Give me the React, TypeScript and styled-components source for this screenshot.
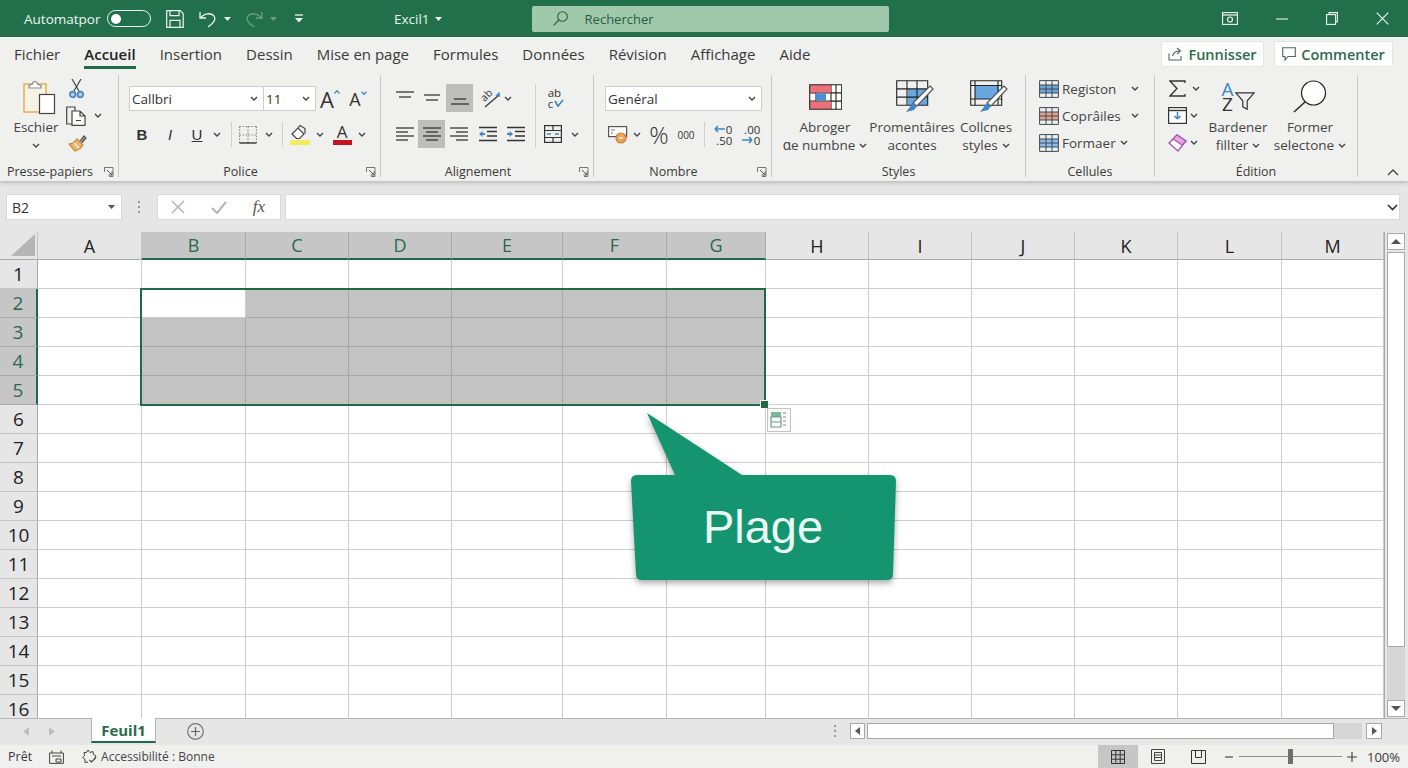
import React from 'react';
import styled, { createGlobalStyle } from 'styled-components';

const GlobalStyle = createGlobalStyle`
  html, body { margin: 0; padding: 0; background: #fff; }
  body { font-family: "Open Sans", "Noto Sans", sans-serif; color: #333; overflow: hidden; }
`;

const GREEN = '#21704b';
const DARK_GREEN = '#1f6b48';

const Page = styled.div`
  width: 1408px;
  height: 768px;
  display: flex;
  flex-direction: column;
  overflow: hidden;
`;

/* ---------- title bar ---------- */
const TitleBar = styled.div`
  height: 37px;
  flex: none;
  background: ${GREEN};
  display: flex;
  align-items: center;
  padding-left: 24px;
  color: #eef5f0;
`;
const TitleText = styled.span<{ $w?: number; $ml?: number }>`
  font-size: 13.5px;
  margin-left: ${p => p.$ml ?? 0}px;
  width: ${p => (p.$w ? `${p.$w}px` : 'auto')};
  white-space: nowrap;
`;
const Toggle = styled.span`
  margin-left: 7px;
  width: 44px;
  height: 17px;
  box-sizing: border-box;
  border: 1.5px solid #f1f6f2;
  border-radius: 9px;
  display: flex;
  align-items: center;
  padding-left: 3px;
`;
const Knob = styled.span`
  width: 10px;
  height: 10px;
  border-radius: 50%;
  background: #fff;
`;
const Slot = styled.span<{ $w: number; $ml?: number }>`
  flex: none;
  width: ${p => p.$w}px;
  margin-left: ${p => p.$ml ?? 0}px;
  display: flex;
  align-items: center;
  justify-content: center;
`;
const SearchBox = styled.div`
  margin-left: 90px;
  width: 357px;
  height: 26px;
  background: #a0c9ab;
  border-radius: 2px;
  display: flex;
  align-items: center;
  padding-left: 21px;
  box-sizing: border-box;
  font-size: 13px;
  color: #2b5c42;
`;
const SearchText = styled.span`
  margin-left: 17px;
`;
const WindowControls = styled.div`
  margin-left: auto;
  display: flex;
  align-items: center;
  padding-right: 19px;
`;

/* ---------- ribbon ---------- */
const Ribbon = styled.div`
  height: 144px;
  flex: none;
  background: #f0f0ee;
  position: relative;
  z-index: 2;
  box-shadow: 0 2px 4px rgba(0, 0, 0, 0.18);
`;
const TabRow = styled.div`
  height: 33px;
  display: flex;
  align-items: center;
  padding: 0 15px 0 14px;
  gap: 24px;
  font-size: 15px;
  color: #3a3a3a;
`;
const Tab = styled.span<{ $active?: boolean }>`
  position: relative;
  white-space: nowrap;
  font-weight: ${p => (p.$active ? 600 : 400)};
  color: ${p => (p.$active ? '#222' : 'inherit')};
  &::after {
    content: '';
    display: ${p => (p.$active ? 'block' : 'none')};
    position: absolute;
    left: 0;
    right: 0;
    bottom: -5px;
    height: 3px;
    background: ${DARK_GREEN};
  }
`;
const TabActions = styled.div`
  margin-left: auto;
  margin-top: 1px;
  display: flex;
  gap: 10px;
`;
const ActionButton = styled.div<{ $w: number }>`
  width: ${p => p.$w}px;
  height: 26px;
  box-sizing: border-box;
  background: #fff;
  border: 1px solid #e4e4e2;
  border-radius: 2px;
  display: flex;
  align-items: center;
  justify-content: center;
  gap: 5px;
  font-size: 14.5px;
  font-weight: 600;
  color: #2f6a4d;
`;
const Groups = styled.div`
  display: flex;
  margin-top: 5px;
  height: 102px;
`;
const Group = styled.section<{ $w: number; $plain?: boolean }>`
  width: ${p => p.$w}px;
  flex: none;
  box-sizing: border-box;
  border-right: ${p => (p.$plain ? 'none' : '1px solid #c9c9c7')};
  display: flex;
  flex-direction: column;
`;
const GroupBody = styled.div<{ $pl?: number; $column?: boolean }>`
  height: 85px;
  display: flex;
  flex-direction: ${p => (p.$column ? 'column' : 'row')};
  padding-left: ${p => p.$pl ?? 0}px;
`;
const GroupFooter = styled.div`
  height: 17px;
  display: flex;
  line-height: 24px;
  font-size: 12.5px;
  color: #3a3a3a;
`;
const GroupLabel = styled.span`
  flex: 1;
  text-align: center;
  white-space: nowrap;
`;
const Launcher = styled.span`
  width: 18px;
  flex: none;
  display: flex;
  justify-content: center;
  padding-top: 7px;
  height: 9px;
`;
const Large = styled.div<{ $w: number }>`
  width: ${p => p.$w}px;
  flex: none;
  display: flex;
  flex-direction: column;
  align-items: center;
  font-size: 13.5px;
  line-height: 18px;
  color: #444;
  white-space: nowrap;
`;
const LargeIcon = styled.div<{ $ml?: number }>`
  height: 43px;
  margin-left: ${p => p.$ml ?? 0}px;
  display: flex;
  align-items: center;
  justify-content: center;
`;
const ToolColumn = styled.div`
  display: flex;
  flex-direction: column;
`;
const ToolRow = styled.div<{ $h?: number; $w?: number }>`
  height: ${p => p.$h ?? 27}px;
  width: ${p => (p.$w ? `${p.$w}px` : 'auto')};
  display: flex;
  align-items: center;
  flex: none;
`;
const Combo = styled.div<{ $w: number; $ml?: number }>`
  width: ${p => p.$w}px;
  margin-left: ${p => p.$ml ?? 0}px;
  height: 25px;
  box-sizing: border-box;
  flex: none;
  background: #fff;
  border: 1px solid #cdcdcb;
  display: flex;
  align-items: center;
  justify-content: space-between;
  padding: 0 5px 0 2px;
  font-size: 13.5px;
  color: #333;
`;
const FontGrowText = styled.span<{ $size: number; $thin?: boolean }>`
  font-size: ${p => p.$size}px;
  font-weight: ${p => (p.$thin ? 300 : 400)};
  line-height: 1;
  color: #333;
`;
const StyleGlyph = styled.span<{ $weight?: number; $italic?: boolean; $line?: boolean }>`
  font-family: "Liberation Sans", sans-serif;
  font-size: 15px;
  font-weight: ${p => p.$weight ?? 400};
  font-style: ${p => (p.$italic ? 'italic' : 'normal')};
  text-decoration: ${p => (p.$line ? 'underline' : 'none')};
  color: #333;
`;
const ColorStack = styled.span`
  display: flex;
  flex-direction: column;
  align-items: center;
  font-size: 17px;
  line-height: 16px;
  color: #333;
`;
const ColorBar = styled.span`
  width: 19px;
  height: 5px;
  background: #c8141e;
`;
const VLine = styled.span<{ $ml?: number; $h?: number }>`
  flex: none;
  width: 1px;
  height: ${p => (p.$h ? `${p.$h}px` : 'auto')};
  align-self: ${p => (p.$h ? 'center' : 'stretch')};
  margin-left: ${p => p.$ml ?? 0}px;
  background: #cfcfcd;
`;
const AlignButton = styled.span<{ $w: number; $on?: boolean }>`
  width: ${p => p.$w}px;
  height: 28px;
  flex: none;
  display: flex;
  align-items: center;
  justify-content: center;
  background: ${p => (p.$on ? '#bdbdbb' : 'transparent')};
`;
const AlignBody = styled.div`
  display: flex;
  padding-top: 9px;
  height: 64px;
`;
const AlignColumn = styled.div<{ $w?: number }>`
  display: flex;
  flex-direction: column;
  gap: 8px;
  width: ${p => (p.$w ? `${p.$w}px` : 'auto')};
`;
const NumberBody = styled.div`
  display: flex;
  flex-direction: column;
  padding-top: 11px;
  gap: 11px;
`;
const OrientBox = styled.span`
  display: grid;
  place-items: center;
  width: 24px;
  height: 22px;
  & > * {
    grid-area: 1 / 1;
  }
`;
const OrientText = styled.span`
  font-size: 10.5px;
  line-height: 10px;
  color: #333;
  transform: translate(-4px, -3px) rotate(-45deg);
`;
const WrapStack = styled.span`
  display: flex;
  flex-direction: column;
  font-size: 11.5px;
  line-height: 11px;
  color: #333;
`;
const WrapLine = styled.span`
  display: flex;
  align-items: center;
  gap: 1px;
`;
const DecimalStack = styled.span<{ $end?: boolean }>`
  display: flex;
  flex-direction: column;
  align-items: ${p => (p.$end ? 'flex-end' : 'center')};
  font-size: 11.5px;
  line-height: 11px;
  color: #333;
`;
const DecimalLine = styled.span`
  display: flex;
  align-items: center;
  gap: 1px;
`;
const SortBox = styled.span`
  display: flex;
  align-items: center;
  gap: 1px;
`;
const SortLetters = styled.span`
  display: flex;
  flex-direction: column;
  align-items: center;
  font-size: 19px;
  line-height: 15px;
  color: #333;
`;
const SortTop = styled.span`
  color: #3f86c6;
`;
const ListText = styled.span`
  font-size: 13.5px;
  margin-left: 3px;
  color: #444;
  white-space: nowrap;
`;
const Push = styled.span`
  margin-left: auto;
`;
const Collapse = styled.div`
  flex: 1;
  display: flex;
  justify-content: flex-end;
  align-items: flex-end;
  padding: 0 10px 1px 0;
`;

/* ---------- formula bar ---------- */
const FormulaBar = styled.div`
  height: 51px;
  flex: none;
  box-sizing: border-box;
  background: #e6e6e6;
  padding: 13px 0 0 6px;
  display: flex;
  align-items: flex-start;
`;
const FieldBox = styled.div<{ $w: number; $ml?: number; $start?: boolean; $pr?: number }>`
  width: ${p => p.$w}px;
  margin-left: ${p => p.$ml ?? 0}px;
  height: 26px;
  box-sizing: border-box;
  flex: none;
  background: #fff;
  border: 1px solid #dadada;
  display: flex;
  align-items: center;
  justify-content: ${p => (p.$start ? 'flex-start' : 'space-between')};
  font-size: 14px;
  padding: 0 ${p => p.$pr ?? 6}px 0 5px;
`;
const Dots = styled.span<{ $ml?: number }>`
  margin-left: ${p => p.$ml ?? 16}px;
  flex: none;
  width: 2px;
  height: 12px;
  margin-top: 7px;
  background: repeating-linear-gradient(to bottom, #999 0 2px, transparent 2px 5px);
`;
const FxText = styled.span`
  font-family: "Liberation Serif", serif;
  font-style: italic;
  font-size: 17px;
  color: #555;
`;

/* ---------- sheet ---------- */
const Sheet = styled.div`
  height: 486px;
  flex: none;
  display: flex;
  background: #e6e6e6;
`;
const GridWrap = styled.div`
  position: relative;
  width: 1385px;
  flex: none;
  overflow: hidden;
  box-sizing: border-box;
  border-right: 1px solid #a9a9a9;
`;
const Cells = styled.div`
  display: grid;
  grid-template-columns: 38px 104px 104px 103px 103px 111px 104px 99px 103px 103px 103px 103px 104px 102px;
  grid-template-rows: 28px repeat(16, 29px);
  background: #fff;
`;
const Corner = styled.div`
  background: #e6e6e6;
  border-right: 1px solid #c4c4c4;
  border-bottom: 1px solid #a9a9a9;
  display: flex;
  align-items: flex-end;
  justify-content: flex-end;
  padding: 0 2px 3px 0;
`;
const ColHead = styled.div<{ $on?: boolean }>`
  box-sizing: border-box;
  background: ${p => (p.$on ? '#c6c6c6' : '#e6e6e6')};
  color: ${p => (p.$on ? '#2a6a4b' : '#222')};
  border-right: 1px solid ${p => (p.$on ? '#a9a9a9' : '#c4c4c4')};
  border-bottom: ${p => (p.$on ? `2px solid ${DARK_GREEN}` : '1px solid #a9a9a9')};
  display: flex;
  align-items: center;
  justify-content: center;
  font-size: 18px;
`;
const RowHead = styled.div<{ $on?: boolean }>`
  box-sizing: border-box;
  background: ${p => (p.$on ? '#c6c6c6' : '#e6e6e6')};
  color: ${p => (p.$on ? '#2a6a4b' : '#222')};
  border-right: ${p => (p.$on ? `2px solid ${DARK_GREEN}` : '1px solid #a9a9a9')};
  border-bottom: 1px solid ${p => (p.$on ? '#a9a9a9' : '#c4c4c4')};
  display: flex;
  align-items: center;
  justify-content: center;
  font-size: 19px;
`;
const Cell = styled.div<{ $sel?: boolean }>`
  box-sizing: border-box;
  background: ${p => (p.$sel ? '#c3c3c3' : '#fff')};
  border-right: 1px solid ${p => (p.$sel ? '#a8a8a8' : '#cdcdcd')};
  border-bottom: 1px solid ${p => (p.$sel ? '#a8a8a8' : '#cdcdcd')};
`;
const Selection = styled.div`
  position: absolute;
  left: 140px;
  top: 56px;
  width: 626px;
  height: 118px;
  box-sizing: border-box;
  border: 2px solid ${DARK_GREEN};
  pointer-events: none;
`;
const FillHandle = styled.span`
  position: absolute;
  right: -5px;
  bottom: -5px;
  width: 7px;
  height: 7px;
  background: ${DARK_GREEN};
  border: 1px solid #fff;
`;
const QuickAnalysis = styled.div`
  position: absolute;
  left: 767px;
  top: 176px;
  width: 24px;
  height: 24px;
  box-sizing: border-box;
  background: #fafafa;
  border: 1px solid #c4c4c4;
  display: flex;
  align-items: center;
  justify-content: center;
`;
const Callout = styled.div`
  position: absolute;
  left: 625px;
  top: 178px;
  width: 276px;
  height: 180px;
  box-sizing: border-box;
  padding: 65px 0 12px;
  display: flex;
  align-items: center;
  justify-content: center;
`;
const CalloutShape = styled.svg`
  position: absolute;
  left: 0;
  top: 0;
  filter: drop-shadow(0 3px 3px rgba(0, 0, 0, 0.35));
`;
const CalloutLabel = styled.span`
  position: relative;
  font-family: "Liberation Sans", Arial, sans-serif;
  font-size: 47px;
  color: #e9faf4;
`;
const VScroll = styled.div`
  width: 23px;
  flex: none;
  box-sizing: border-box;
  padding: 1px 3px 1px 2px;
  display: flex;
  flex-direction: column;
  gap: 2px;
`;
const ScrollButton = styled.div<{ $w?: number; $h?: number; $ml?: number }>`
  width: ${p => (p.$w ? `${p.$w}px` : 'auto')};
  height: ${p => p.$h ?? 17}px;
  margin-left: ${p => p.$ml ?? 0}px;
  flex: none;
  box-sizing: border-box;
  background: #fff;
  border: 1px solid #a9a9a9;
  display: flex;
  align-items: center;
  justify-content: center;
`;
const VThumb = styled.div`
  height: 395px;
  flex: none;
  box-sizing: border-box;
  background: #fff;
  border: 1px solid #a9a9a9;
`;
const VTrack = styled.div`
  flex: 1;
  background: #d6d6d6;
  margin: -2px 0;
`;

/* ---------- sheet tabs ---------- */
const SheetTabs = styled.div`
  height: 27px;
  flex: none;
  box-sizing: border-box;
  background: #e6e6e6;
  box-shadow: inset 0 1px 0 #b5b5b5;
  display: flex;
  align-items: flex-start;
`;
const SheetTab = styled.div`
  margin-left: 35px;
  width: 65px;
  height: 25px;
  flex: none;
  box-sizing: border-box;
  background: #fff;
  border: 1px solid #b5b5b5;
  border-top: none;
  border-bottom: 2px solid ${DARK_GREEN};
  display: flex;
  align-items: center;
  justify-content: center;
  font-size: 15px;
  font-weight: 700;
  color: #2a6a4b;
`;
const HScrollArea = styled.div`
  margin-left: 10px;
  padding-top: 5px;
  display: flex;
  align-items: flex-start;
`;
const HTrack = styled.div`
  width: 495px;
  height: 16px;
  margin-left: 2px;
  flex: none;
  background: #d6d6d6;
  display: flex;
`;
const HThumb = styled.div`
  width: 467px;
  box-sizing: border-box;
  background: #fff;
  border: 1px solid #a9a9a9;
`;

/* ---------- status bar ---------- */
const StatusBar = styled.div`
  height: 23px;
  flex: 1;
  background: #f0f0ee;
  display: flex;
  align-items: center;
  padding-left: 8px;
  font-size: 12.5px;
  color: #3a3a3a;
`;
const StatusText = styled.span`
  margin-left: 4px;
  font-size: 12px;
  color: #444;
  white-space: nowrap;
`;
const StatusRight = styled.div`
  margin-left: auto;
  height: 100%;
  display: flex;
  align-items: center;
`;
const ViewButton = styled.span<{ $on?: boolean }>`
  width: 40px;
  height: 100%;
  display: flex;
  align-items: center;
  justify-content: center;
  background: ${p => (p.$on ? '#c6c6c6' : 'transparent')};
`;
const ZoomTrack = styled.span`
  position: relative;
  margin-left: 6px;
  width: 103px;
  height: 1px;
  background: #8d8d8d;
`;
const ZoomThumb = styled.span`
  position: absolute;
  left: 49px;
  top: -7px;
  width: 5px;
  height: 15px;
  background: #6f6f6f;
`;
const ZoomValue = styled.span`
  margin-left: 10px;
  width: 41px;
  font-size: 13px;
`;

/* ---------- icons ---------- */
const Ico = styled.svg<{ $mt?: number; $mb?: number; $dim?: boolean }>`
  display: block;
  flex: none;
  fill: none;
  stroke: #444;
  stroke-width: 1.2;
  margin-top: ${p => p.$mt ?? 0}px;
  margin-bottom: ${p => p.$mb ?? 0}px;
  opacity: ${p => (p.$dim ? 0.35 : 1)};
`;

const Chev = ({ ml = 0 }: { ml?: number }) => (
  <Slot $w={8} $ml={ml}>
    <Ico width="8" height="5" viewBox="0 0 8 5">
      <path d="M1 1l3 3 3-3" strokeWidth="1.4" />
    </Ico>
  </Slot>
);

const Caret = ({ color = '#eef5f0', ml = 0, dim = false }: { color?: string; ml?: number; dim?: boolean }) => (
  <Slot $w={7} $ml={ml}>
    <Ico width="7" height="4" viewBox="0 0 7 4" $dim={dim}>
      <path d="M0 0h7L3.5 4z" fill={color} stroke="none" />
    </Ico>
  </Slot>
);

const LauncherIcon = () => (
  <Ico width="10" height="10" viewBox="0 0 10 10">
    <path d="M.5 5V.5H9M9 .5V9.5H5" stroke="#777" strokeWidth="1" />
    <path d="M3 3l5 5M8 4.5V8H4.5" stroke="#555" strokeWidth="1" />
  </Ico>
);

const LinesIcon = ({ rows }: { rows: [number, number, number][] }) => (
  <Ico width="18" height="14" viewBox="0 0 18 14">
    {rows.map(([a, b, y]) => (
      <path key={`${a}-${y}`} d={`M${a} ${y}H${b}`} stroke="#333" strokeWidth="1.3" />
    ))}
  </Ico>
);

const IndentIcon = ({ flip }: { flip?: boolean }) => (
  <Ico width="20" height="16" viewBox="0 0 20 16">
    <path d="M1 1.5h18M9 5.5h10M9 10h10M1 14.5h18" stroke="#333" strokeWidth="1.3" />
    <path d={flip ? 'M1 8l3.5-3v2H7v2H4.5v2z' : 'M7 8L3.5 5v2H1v2h2.5v2z'} fill="#3f86c6" stroke="none" />
  </Ico>
);

const PasteIcon = () => (
  <Ico width="33" height="36" viewBox="0 0 33 36">
    <rect x="1" y="5" width="22" height="28" fill="#f7f2e6" stroke="#e8b15c" strokeWidth="1.6" />
    <path d="M6 9h12V6.5L14.5 5a2.5 2.5 0 0 0-5 0L6 6.5z" fill="#fdfdfd" stroke="#8a8a8a" />
    <rect x="16.5" y="15.5" width="15" height="19" fill="#fff" stroke="#444" strokeWidth="1.2" />
  </Ico>
);
const ScissorsIcon = () => (
  <Ico width="15" height="20" viewBox="0 0 15 20">
    <path d="M3 0l7 12M12 0L5 12" stroke="#444" strokeWidth="1.2" />
    <circle cx="3.7" cy="15.5" r="2.8" stroke="#4f86c0" strokeWidth="1.8" fill="#b7cfe6" />
    <circle cx="11.3" cy="15.5" r="2.8" stroke="#4f86c0" strokeWidth="1.8" fill="#b7cfe6" />
  </Ico>
);
const CopyIcon = () => (
  <Ico width="20" height="20" viewBox="0 0 20 20">
    <path d="M6 18H.7V1H9v5" stroke="#444" />
    <path d="M6 5h8l5 5v9.3H6zM14 5v5h5M10 14.5h5" fill="#fff" stroke="#444" />
  </Ico>
);
const BrushIcon = () => (
  <Ico width="20" height="18" viewBox="0 0 20 18">
    <path d="M12 7l4-5 2 2-4 5" fill="#8a8a8a" stroke="#555" />
    <path d="M9 5l6 6-3 3.5-5 2.5-6-7 4-1z" fill="#eeb567" stroke="#c98a37" />
    <path d="M6 9l5 5" stroke="#fff" />
  </Ico>
);
const BordersIcon = () => (
  <Ico width="18" height="18" viewBox="0 0 18 18">
    <path d="M.5.5h17M.5.5v17M17.5.5v17M9 .5v17M.5 9h17" stroke="#888" strokeDasharray="1.5 1.5" />
    <path d="M.5 17h17" stroke="#333" strokeWidth="1.4" />
  </Ico>
);
const FillIcon = () => (
  <Ico width="20" height="20" viewBox="0 0 20 20">
    <path d="M2 9l6-6 6 6-4.5 4.5h-3z" fill="#fff" stroke="#444" />
    <path d="M8 3l2-2.5 5 3v5" stroke="#444" />
    <rect x="0" y="15" width="20" height="5" fill="#f3ec5c" stroke="none" />
  </Ico>
);
const MergeIcon = () => (
  <Ico width="18" height="18" viewBox="0 0 18 18">
    <rect x=".6" y=".6" width="16.8" height="16.8" stroke="#333" />
    <path d="M.6 5.5h16.8M.6 12.5h16.8M9 .6v4.9M9 12.5v4.9" stroke="#333" />
    <path d="M3 9h4M11 9h4" stroke="#3f86c6" strokeWidth="1.5" />
  </Ico>
);
const MoneyIcon = () => (
  <Ico width="20" height="18" viewBox="0 0 20 18">
    <rect x=".6" y=".6" width="18" height="10" fill="#fff" stroke="#555" />
    <path d="M3 4h4M3 7h2" stroke="#777" />
    <circle cx="13" cy="12" r="5" fill="#e9a45c" stroke="#c77f35" />
    <path d="M11 12h4" stroke="#fff" />
  </Ico>
);
const ArrowLeft = () => (
  <Ico width="11" height="8" viewBox="0 0 11 8">
    <path d="M1 4h10M1 4l3-3M1 4l3 3" stroke="#3f86c6" strokeWidth="1.6" />
  </Ico>
);
const ArrowRight = () => (
  <Ico width="11" height="8" viewBox="0 0 11 8">
    <path d="M0 4h10M10 4L7 1M10 4L7 7" stroke="#3f86c6" strokeWidth="1.6" />
  </Ico>
);

const RulesIcon = () => (
  <Ico width="33" height="26" viewBox="0 0 33 26">
    <rect x="1" y="1" width="31" height="24" fill="#fff" stroke="none" />
    <path d="M.7 8.9h32M.7 17.1h32M7 .7v24.6M22 .7v24.6M27 .7v24.6" stroke="#222" strokeWidth="1.1" />
    <rect x="1" y="1" width="21" height="7.5" fill="#ee6f77" stroke="none" />
    <rect x="1" y="17.5" width="21" height="7.5" fill="#ee6f77" stroke="none" />
    <rect x="7" y="9.4" width="10" height="7.2" fill="#4a90d6" stroke="none" />
    <path d="M.7.7h32v24.6H.7z" stroke="#222" strokeWidth="1.1" />
  </Ico>
);
const PenOver = () => (
  <>
    <path d="M34 6l3 3-16 17-4-3z" fill="#fff" stroke="#555" />
    <path d="M17 23l4 3-3 4-8 2z" fill="#3f86c6" stroke="none" />
  </>
);
const TableStyleIcon = () => (
  <Ico width="38" height="33" viewBox="0 0 38 33">
    <rect x="12" y="9" width="20" height="16" fill="#69a7e0" stroke="none" />
    <path d="M.7.7h31v24.6H.7zM.7 8.9h31M.7 17.1h31M11 .7v24.6M21 .7v24.6" stroke="#222" strokeWidth="1.1" />
    <PenOver />
  </Ico>
);
const CellStyleIcon = () => (
  <Ico width="38" height="33" viewBox="0 0 38 33">
    <rect x="5" y="6" width="24" height="13" fill="#69a7e0" stroke="none" />
    <path d="M.7.7h31v24.6H.7zM.7 5.5h31M.7 19h31M5 .7v24.6M28 .7v24.6" stroke="#222" strokeWidth="1.1" />
    <PenOver />
  </Ico>
);
const CellListIcon = ({ tone }: { tone: string }) => (
  <Ico width="20" height="18" viewBox="0 0 20 18">
    <rect x="1" y="5" width="18" height="8" fill={tone} stroke="none" />
    <path d="M.6.6h18.8v16.8H.6zM.6 5h18.8M.6 9h18.8M.6 13h18.8M7 .6v16.8M13 .6v16.8" stroke="#3a4a55" strokeWidth="1" />
  </Ico>
);
const SumIcon = () => (
  <Ico width="17" height="17" viewBox="0 0 17 17">
    <path d="M16 3V1H1l7 7.5L1 16h15v-2" stroke="#333" strokeWidth="1.3" />
  </Ico>
);
const FillDownIcon = () => (
  <Ico width="19" height="17" viewBox="0 0 19 17">
    <rect x=".6" y=".6" width="17.8" height="15.8" fill="#fff" stroke="#333" />
    <path d="M.6 3.5h17.8" stroke="#333" strokeWidth="1.4" />
    <path d="M9.5 5v6M9.5 12l-3-3M9.5 12l3-3" stroke="#3f86c6" strokeWidth="1.6" />
  </Ico>
);
const EraserIcon = () => (
  <Ico width="19" height="18" viewBox="0 0 19 18">
    <path d="M1 9l8-8 9 6-8 10z" fill="#fff" stroke="#a35bbd" strokeWidth="1.4" />
    <path d="M5 5l9 6 4-4-9-6z" fill="#e7a8dc" stroke="#a35bbd" strokeWidth="1.2" />
  </Ico>
);
const FunnelIcon = () => (
  <Ico width="20" height="18" viewBox="0 0 20 18" $mt={9}>
    <path d="M.8.8h18.4l-7 8v8.4l-4.400-2.400V8.800z" stroke="#333" strokeWidth="1.2" />
  </Ico>
);
const FindIcon = () => (
  <Ico width="34" height="33" viewBox="0 0 34 33">
    <circle cx="20.5" cy="13" r="12" stroke="#222" strokeWidth="1.2" fill="#fdfdfd" />
    <path d="M12 22L1 32" stroke="#222" strokeWidth="1.4" />
  </Ico>
);
const QuickIcon = () => (
  <Ico width="18" height="18" viewBox="0 0 18 18">
    <rect x="1" y="1" width="10" height="5" fill="#7fb79a" stroke="none" />
    <path d="M1 6h10v10H1zM1 11h10M13 2h3M13 6h3M13 10h3M13 14h3" stroke="#6f9c84" />
  </Ico>
);

const colLetters = ['A', 'B', 'C', 'D', 'E', 'F', 'G', 'H', 'I', 'J', 'K', 'L', 'M'];
const tabs = ['Fichier', 'Accueil', 'Insertion', 'Dessin', 'Mise en page', 'Formules', 'Données', 'Révision', 'Affichage', 'Aide'];
const rowNumbers = Array.from({ length: 16 }, (_, i) => i + 1);

// B2:G5 is the selection, B2 stays white as the active cell
const isSelected = (col: number, row: number) => col >= 1 && col <= 6 && row >= 2 && row <= 5 && !(col === 1 && row === 2);

const App: React.FC = () => (
  <Page>
    <GlobalStyle />
    <TitleBar>
      <TitleText $w={76}>Automatpor</TitleText>
      <Toggle>
        <Knob />
      </Toggle>
      <Slot $w={18} $ml={15}>
        <Ico width="18" height="18" viewBox="0 0 18 18">
          <path d="M.7.7h13.5l3 3v13.6H.7zM4 .7v5h9v-5M4 17.3v-7h10v7" stroke="#eef5f0" strokeWidth="1.2" />
        </Ico>
      </Slot>
      <Slot $w={18} $ml={15}>
        <Ico width="18" height="18" viewBox="0 0 18 18">
          <path d="M1 2v6h6M1.5 8C5 3 12 2.500 15 6c2 3 0 7-6 11" stroke="#eef5f0" strokeWidth="1.3" />
        </Ico>
      </Slot>
      <Caret ml={7} />
      <Slot $w={18} $ml={14}>
        <Ico width="18" height="18" viewBox="0 0 18 18" $dim>
          <path d="M17 2v6h-6M16.5 8C13 3 6 2.500 3 6c-2 3 0 7 6 11" stroke="#eef5f0" strokeWidth="1.3" />
        </Ico>
      </Slot>
      <Caret ml={7} dim />
      <Slot $w={10} $ml={17}>
        <Ico width="10" height="9" viewBox="0 0 10 9">
          <path d="M1 1h8" stroke="#eef5f0" strokeWidth="1.3" />
          <path d="M1 4h8L5 8.5z" fill="#eef5f0" stroke="none" />
        </Ico>
      </Slot>
      <TitleText $ml={90}>Excil1</TitleText>
      <Caret ml={5} />
      <SearchBox>
        <Ico width="15" height="15" viewBox="0 0 15 15">
          <circle cx="9.5" cy="5.5" r="4.8" stroke="#2b5c42" strokeWidth="1.1" />
          <path d="M6 9L.7 14.3" stroke="#2b5c42" strokeWidth="1.2" />
        </Ico>
        <SearchText>Rechercher</SearchText>
      </SearchBox>
      <WindowControls>
        <Slot $w={16}>
          <Ico width="16" height="13" viewBox="0 0 16 13">
            <rect x=".6" y=".6" width="14.8" height="11.8" stroke="#eef5f0" strokeWidth="1.1" />
            <path d="M.6 3h14.8" stroke="#eef5f0" />
            <circle cx="8" cy="7.5" r="2.5" stroke="#eef5f0" />
          </Ico>
        </Slot>
        <Slot $w={12} $ml={38}>
          <Ico width="12" height="2" viewBox="0 0 12 2">
            <path d="M0 1h12" stroke="#eef5f0" strokeWidth="1.1" />
          </Ico>
        </Slot>
        <Slot $w={12} $ml={38}>
          <Ico width="12" height="13" viewBox="0 0 12 13">
            <rect x=".6" y="2.6" width="9" height="9.8" stroke="#eef5f0" strokeWidth="1.1" />
            <path d="M3 2.5V.6h8.400v9H9.600" stroke="#eef5f0" strokeWidth="1.1" />
          </Ico>
        </Slot>
        <Slot $w={13} $ml={38}>
          <Ico width="13" height="13" viewBox="0 0 13 13">
            <path d="M.7.7l11.6 11.6M12.3.7L.7 12.3" stroke="#eef5f0" strokeWidth="1.2" />
          </Ico>
        </Slot>
      </WindowControls>
    </TitleBar>

    <Ribbon>
      <TabRow>
        {tabs.map(t => (
          <Tab key={t} $active={t === 'Accueil'}>{t}</Tab>
        ))}
        <TabActions>
          <ActionButton $w={103}>
            <Ico width="15" height="14" viewBox="0 0 15 14">
              <path d="M1 6.5V13h12V9M4.5 9c1-3.5 3.5-5 7-5M9 1l3.5 3L9 7" stroke="#4a6a5a" strokeWidth="1.1" />
            </Ico>
            Funnisser
          </ActionButton>
          <ActionButton $w={119}>
            <Ico width="14" height="14" viewBox="0 0 14 14">
              <path d="M.7.7h12.6v8.800H6L3 13V9.500H.7z" stroke="#4a6a5a" strokeWidth="1.1" />
            </Ico>
            Commenter
          </ActionButton>
        </TabActions>
      </TabRow>

      <Groups>
        <Group $w={119}>
          <GroupBody>
            <Large $w={72}>
              <LargeIcon $ml={6}>
                <PasteIcon />
              </LargeIcon>
              Eschier
              <ToolRow $h={18}>
                <Chev />
              </ToolRow>
            </Large>
            <ToolColumn>
              <ToolRow>
                <Slot $w={15} $ml={-3}>
                  <ScissorsIcon />
                </Slot>
              </ToolRow>
              <ToolRow>
                <Slot $w={20} $ml={-6}>
                  <CopyIcon />
                </Slot>
                <Chev ml={8} />
              </ToolRow>
              <ToolRow>
                <Slot $w={20} $ml={-4}>
                  <BrushIcon />
                </Slot>
              </ToolRow>
            </ToolColumn>
          </GroupBody>
          <GroupFooter>
            <GroupLabel>Presse-papiers</GroupLabel>
            <Launcher>
              <LauncherIcon />
            </Launcher>
          </GroupFooter>
        </Group>

        <Group $w={262}>
          <GroupBody $pl={10} $column>
            <NumberBody>
              <ToolRow $h={25}>
                <Combo $w={135}>
                  Callbri
                  <Chev />
                </Combo>
                <Combo $w={53} $ml={-1}>
                  11
                  <Chev />
                </Combo>
                <Slot $w={20} $ml={4}>
                  <FontGrowText $size={22}>A</FontGrowText>
                  <Ico width="6" height="4" viewBox="0 0 6 4" $mb={14}>
                    <path d="M.5 3.5L3 .7l2.5 2.8" stroke="#3f86c6" />
                  </Ico>
                </Slot>
                <Slot $w={18} $ml={9}>
                  <FontGrowText $size={18}>A</FontGrowText>
                  <Ico width="6" height="4" viewBox="0 0 6 4" $mb={12}>
                    <path d="M.5.7L3 3.5 5.5.7" stroke="#3f86c6" />
                  </Ico>
                </Slot>
              </ToolRow>
              <ToolRow $h={25}>
                <Slot $w={26}>
                  <StyleGlyph $weight={700}>B</StyleGlyph>
                </Slot>
                <Slot $w={26} $ml={2}>
                  <StyleGlyph $italic>I</StyleGlyph>
                </Slot>
                <Slot $w={26} $ml={1}>
                  <StyleGlyph $line>U</StyleGlyph>
                </Slot>
                <Chev ml={3} />
                <VLine $ml={10} $h={25} />
                <Slot $w={18} $ml={7}>
                  <BordersIcon />
                </Slot>
                <Chev ml={8} />
                <VLine $ml={9} $h={25} />
                <Slot $w={20} $ml={7}>
                  <FillIcon />
                </Slot>
                <Chev ml={6} />
                <Slot $w={20} $ml={8}>
                  <ColorStack>
                    A
                    <ColorBar />
                  </ColorStack>
                </Slot>
                <Chev ml={6} />
              </ToolRow>
            </NumberBody>
          </GroupBody>
          <GroupFooter>
            <GroupLabel>Police</GroupLabel>
            <Launcher>
              <LauncherIcon />
            </Launcher>
          </GroupFooter>
        </Group>

        <Group $w={213}>
          <GroupBody $pl={10}>
            <AlignBody>
              <AlignColumn $w={144}>
                <ToolRow $h={28}>
                  <AlignButton $w={27}>
                    <LinesIcon rows={[[0, 18, 1], [3, 15, 6]]} />
                  </AlignButton>
                  <AlignButton $w={28}>
                    <LinesIcon rows={[[1, 17, 4], [3, 15, 9]]} />
                  </AlignButton>
                  <AlignButton $w={27} $on>
                    <LinesIcon rows={[[3, 15, 8], [0, 18, 13]]} />
                  </AlignButton>
                  <Slot $w={24} $ml={5}>
                    <OrientBox>
                      <OrientText>ab</OrientText>
                      <Ico width="22" height="20" viewBox="0 0 22 20">
                        <path d="M6 19L20 7" stroke="#333" />
                        <path d="M20 5l.5 3-3-.5z" fill="#3f86c6" stroke="#3f86c6" />
                      </Ico>
                    </OrientBox>
                  </Slot>
                  <Chev ml={2} />
                </ToolRow>
                <ToolRow $h={28}>
                  <AlignButton $w={27}>
                    <LinesIcon rows={[[0, 18, 1], [0, 12, 5], [0, 18, 9], [0, 12, 13]]} />
                  </AlignButton>
                  <AlignButton $w={27} $on>
                    <LinesIcon rows={[[0, 18, 1], [3, 15, 5], [0, 18, 9], [3, 15, 13]]} />
                  </AlignButton>
                  <AlignButton $w={28}>
                    <LinesIcon rows={[[0, 18, 1], [6, 18, 5], [0, 18, 9], [6, 18, 13]]} />
                  </AlignButton>
                  <Slot $w={26} $ml={2}>
                    <IndentIcon flip />
                  </Slot>
                  <Slot $w={26} $ml={2}>
                    <IndentIcon />
                  </Slot>
                </ToolRow>
              </AlignColumn>
              <VLine />
              <AlignColumn>
                <ToolRow $h={28}>
                  <Slot $w={22} $ml={9}>
                    <WrapStack>
                      ab
                      <WrapLine>
                        c
                        <Ico width="10" height="9" viewBox="0 0 10 9">
                          <path d="M1 2l3 5 5-6" stroke="#3f86c6" strokeWidth="1.6" />
                        </Ico>
                      </WrapLine>
                    </WrapStack>
                  </Slot>
                </ToolRow>
                <ToolRow $h={28}>
                  <Slot $w={20} $ml={7}>
                    <MergeIcon />
                  </Slot>
                  <Chev ml={8} />
                </ToolRow>
              </AlignColumn>
            </AlignBody>
          </GroupBody>
          <GroupFooter>
            <GroupLabel>Alignement</GroupLabel>
            <Launcher>
              <LauncherIcon />
            </Launcher>
          </GroupFooter>
        </Group>

        <Group $w={178}>
          <GroupBody $pl={11} $column>
            <NumberBody>
              <ToolRow $h={25}>
                <Combo $w={157}>
                  Genéral
                  <Chev />
                </Combo>
              </ToolRow>
              <ToolRow $h={25}>
                <Slot $w={20} $ml={3}>
                  <MoneyIcon />
                </Slot>
                <Chev ml={5} />
                <Slot $w={22} $ml={7}>
                  <FontGrowText $size={24} $thin>%</FontGrowText>
                </Slot>
                <Slot $w={18} $ml={7}>
                  <FontGrowText $size={10}>000</FontGrowText>
                </Slot>
                <VLine $ml={9} $h={25} />
                <Slot $w={24} $ml={6}>
                  <DecimalStack $end>
                    <DecimalLine>
                      <ArrowLeft />
                      0
                    </DecimalLine>
                    .50
                  </DecimalStack>
                </Slot>
                <Slot $w={24} $ml={4}>
                  <DecimalStack $end>
                    .00
                    <DecimalLine>
                      <ArrowRight />
                      0
                    </DecimalLine>
                  </DecimalStack>
                </Slot>
              </ToolRow>
            </NumberBody>
          </GroupBody>
          <GroupFooter>
            <GroupLabel>Nombre</GroupLabel>
            <Launcher>
              <LauncherIcon />
            </Launcher>
          </GroupFooter>
        </Group>

        <Group $w={254}>
          <GroupBody $pl={8}>
            <Large $w={90}>
              <LargeIcon>
                <RulesIcon />
              </LargeIcon>
              Abroger
              <ToolRow $h={18}>
                ɑe numbne
                <Chev ml={4} />
              </ToolRow>
            </Large>
            <Large $w={84}>
              <LargeIcon $ml={5}>
                <TableStyleIcon />
              </LargeIcon>
              Promentâires
              <ToolRow $h={18}>acontes</ToolRow>
            </Large>
            <Large $w={64}>
              <LargeIcon $ml={5}>
                <CellStyleIcon />
              </LargeIcon>
              Collcnes
              <ToolRow $h={18}>
                styles
                <Chev ml={4} />
              </ToolRow>
            </Large>
          </GroupBody>
          <GroupFooter>
            <GroupLabel>Styles</GroupLabel>
          </GroupFooter>
        </Group>

        <Group $w={129}>
          <GroupBody $pl={13}>
            <ToolColumn>
              <ToolRow $w={100}>
                <CellListIcon tone="#6ea6dc" />
                <ListText>Registon</ListText>
                <Push />
                <Chev />
              </ToolRow>
              <ToolRow $w={100}>
                <CellListIcon tone="#e9a08a" />
                <ListText>Coprâiles</ListText>
                <Push />
                <Chev />
              </ToolRow>
              <ToolRow $w={100}>
                <CellListIcon tone="#8dbbe6" />
                <ListText>Formaer</ListText>
                <Chev ml={4} />
              </ToolRow>
            </ToolColumn>
          </GroupBody>
          <GroupFooter>
            <GroupLabel>Cellules</GroupLabel>
          </GroupFooter>
        </Group>

        <Group $w={203}>
          <GroupBody $pl={12}>
            <ToolColumn>
              <ToolRow $w={36}>
                <Slot $w={20}>
                  <SumIcon />
                </Slot>
                <Chev ml={5} />
              </ToolRow>
              <ToolRow $w={36}>
                <Slot $w={20}>
                  <FillDownIcon />
                </Slot>
                <Chev ml={3} />
              </ToolRow>
              <ToolRow $w={36}>
                <Slot $w={20}>
                  <EraserIcon />
                </Slot>
                <Chev ml={3} />
              </ToolRow>
            </ToolColumn>
            <Large $w={70}>
              <LargeIcon>
                <SortBox>
                  <SortLetters>
                    <SortTop>A</SortTop>
                    Z
                  </SortLetters>
                  <FunnelIcon />
                </SortBox>
              </LargeIcon>
              Bardener
              <ToolRow $h={18}>
                fillter
                <Chev ml={4} />
              </ToolRow>
            </Large>
            <Large $w={74}>
              <LargeIcon>
                <FindIcon />
              </LargeIcon>
              Former
              <ToolRow $h={18}>
                selectone
                <Chev ml={4} />
              </ToolRow>
            </Large>
          </GroupBody>
          <GroupFooter>
            <GroupLabel>Édition</GroupLabel>
          </GroupFooter>
        </Group>

        <Group $w={51} $plain>
          <Collapse>
            <Ico width="12" height="7" viewBox="0 0 12 7">
              <path d="M1 6l5-5 5 5" stroke="#444" strokeWidth="1.4" />
            </Ico>
          </Collapse>
        </Group>
      </Groups>
    </Ribbon>

    <FormulaBar>
      <FieldBox $w={116}>
        B2
        <Caret color="#555" />
      </FieldBox>
      <Dots />
      <FieldBox $w={124} $ml={17} $start>
        <Slot $w={14} $ml={8}>
          <Ico width="14" height="14" viewBox="0 0 14 14">
            <path d="M1 1l12 12M13 1L1 13" stroke="#b4b4b4" strokeWidth="1.5" />
          </Ico>
        </Slot>
        <Slot $w={16} $ml={26}>
          <Ico width="16" height="13" viewBox="0 0 16 13">
            <path d="M1 7l5 5L15 1" stroke="#b4b4b4" strokeWidth="2" />
          </Ico>
        </Slot>
        <Slot $w={14} $ml={25}>
          <FxText>fx</FxText>
        </Slot>
      </FieldBox>
      <FieldBox $w={1115} $ml={4} $pr={1}>
        <span />
        <Ico width="11" height="7" viewBox="0 0 11 7">
          <path d="M1 1l4.5 4.5L10 1" stroke="#333" strokeWidth="1.6" />
        </Ico>
      </FieldBox>
    </FormulaBar>

    <Sheet>
      <GridWrap>
        <Cells>
          <Corner>
            <Ico width="24" height="22" viewBox="0 0 24 22">
              <path d="M24 0v22H0z" fill="#b5b5b5" stroke="none" />
            </Ico>
          </Corner>
          {colLetters.map((c, i) => (
            <ColHead key={c} $on={i >= 1 && i <= 6}>{c}</ColHead>
          ))}
          {rowNumbers.map(r => (
            <React.Fragment key={r}>
              <RowHead $on={r >= 2 && r <= 5}>{r}</RowHead>
              {colLetters.map((c, i) => (
                <Cell key={c} $sel={isSelected(i, r)} />
              ))}
            </React.Fragment>
          ))}
        </Cells>
        <Selection>
          <FillHandle />
        </Selection>
        <QuickAnalysis>
          <QuickIcon />
        </QuickAnalysis>
        <Callout>
          <CalloutShape width="280" height="180" viewBox="0 0 280 180">
            <path
              d="M12 65H50L22 3L117 65H265Q271 65 271 71L268 164Q268 170 262 170H17Q11 170 11 164L6 71Q6 65 12 65Z"
              fill="#159470"
            />
          </CalloutShape>
          <CalloutLabel>Plage</CalloutLabel>
        </Callout>
      </GridWrap>
      <VScroll>
        <ScrollButton>
          <Ico width="10" height="5" viewBox="0 0 10 5">
            <path d="M0 5L5 0l5 5z" fill="#555" stroke="none" />
          </Ico>
        </ScrollButton>
        <VThumb />
        <VTrack />
        <ScrollButton>
          <Ico width="10" height="5" viewBox="0 0 10 5">
            <path d="M0 0l5 5 5-5z" fill="#555" stroke="none" />
          </Ico>
        </ScrollButton>
      </VScroll>
    </Sheet>

    <SheetTabs>
      <Slot $w={8} $ml={22}>
        <Ico width="6" height="9" viewBox="0 0 6 9" $mt={9}>
          <path d="M6 0v9L0 4.500z" fill="#bdbdbd" stroke="none" />
        </Ico>
      </Slot>
      <Slot $w={8} $ml={18}>
        <Ico width="6" height="9" viewBox="0 0 6 9" $mt={9}>
          <path d="M0 0v9l6-4.500z" fill="#bdbdbd" stroke="none" />
        </Ico>
      </Slot>
      <SheetTab>Feuil1</SheetTab>
      <Slot $w={17} $ml={31}>
        <Ico width="17" height="17" viewBox="0 0 17 17" $mt={5}>
          <circle cx="8.5" cy="8.5" r="7.8" stroke="#777" />
          <path d="M4 8.5h9M8.5 4v9" stroke="#666" strokeWidth="1.2" />
        </Ico>
      </Slot>
      <Dots $ml={630} />
      <HScrollArea>
        <ScrollButton $w={15} $h={16} $ml={4}>
          <Ico width="5" height="8" viewBox="0 0 5 8">
            <path d="M5 0v8L0 4z" fill="#555" stroke="none" />
          </Ico>
        </ScrollButton>
        <HTrack>
          <HThumb />
        </HTrack>
        <ScrollButton $w={16} $h={16} $ml={4}>
          <Ico width="5" height="8" viewBox="0 0 5 8">
            <path d="M0 0v8l5-4z" fill="#555" stroke="none" />
          </Ico>
        </ScrollButton>
      </HScrollArea>
    </SheetTabs>

    <StatusBar>
      Prêt
      <Slot $w={15} $ml={17}>
        <Ico width="15" height="14" viewBox="0 0 15 14">
          <path d="M.6 3h13.8v10.400H.6zM3 .5V3M12 .5V3M3 6h9M7 9h5v3H7z" stroke="#444" strokeWidth="1" />
        </Ico>
      </Slot>
      <Slot $w={15} $ml={18}>
        <Ico width="16" height="16" viewBox="0 0 16 16">
          <path d="M6 1l2 2.5 3-1 .5 3L14 7l-1.500 2.500" stroke="#444" strokeWidth="1" />
          <path d="M6 1L4.500 3.500H2l.5 3L.7 8.500 3 10.500v3l3-.5" stroke="#444" strokeWidth="1" />
          <path d="M7.500 11l2 2L14 8.500" stroke="#444" strokeWidth="1.2" />
        </Ico>
      </Slot>
      <StatusText>Accessibilité : Bonne</StatusText>
      <StatusRight>
        <ViewButton $on>
          <Ico width="14" height="14" viewBox="0 0 14 14">
            <path d="M.5.5h13v13H.5zM.5 4.800h13M.5 9.200h13M4.800.5v13M9.200.5v13" stroke="#333" strokeWidth="1" />
          </Ico>
        </ViewButton>
        <ViewButton>
          <Ico width="14" height="15" viewBox="0 0 14 15">
            <path d="M.5.5h13v14H.5zM3.500 3.500h7v8h-7zM3.500 6h7M3.500 8.500h7" stroke="#444" strokeWidth="1" />
          </Ico>
        </ViewButton>
        <ViewButton>
          <Ico width="15" height="14" viewBox="0 0 15 14">
            <path d="M.5.5h14v13H.5zM4.500.5v7h6v-7" stroke="#333" strokeWidth="1" />
          </Ico>
        </ViewButton>
        <Slot $w={8} $ml={7}>
          <Ico width="8" height="2" viewBox="0 0 8 2">
            <path d="M0 1h8" stroke="#555" strokeWidth="1.3" />
          </Ico>
        </Slot>
        <ZoomTrack>
          <ZoomThumb />
        </ZoomTrack>
        <Slot $w={10} $ml={5}>
          <Ico width="10" height="10" viewBox="0 0 10 10">
            <path d="M0 5h10M5 0v10" stroke="#444" strokeWidth="1.2" />
          </Ico>
        </Slot>
        <ZoomValue>100%</ZoomValue>
      </StatusRight>
    </StatusBar>
  </Page>
);

export default App;
